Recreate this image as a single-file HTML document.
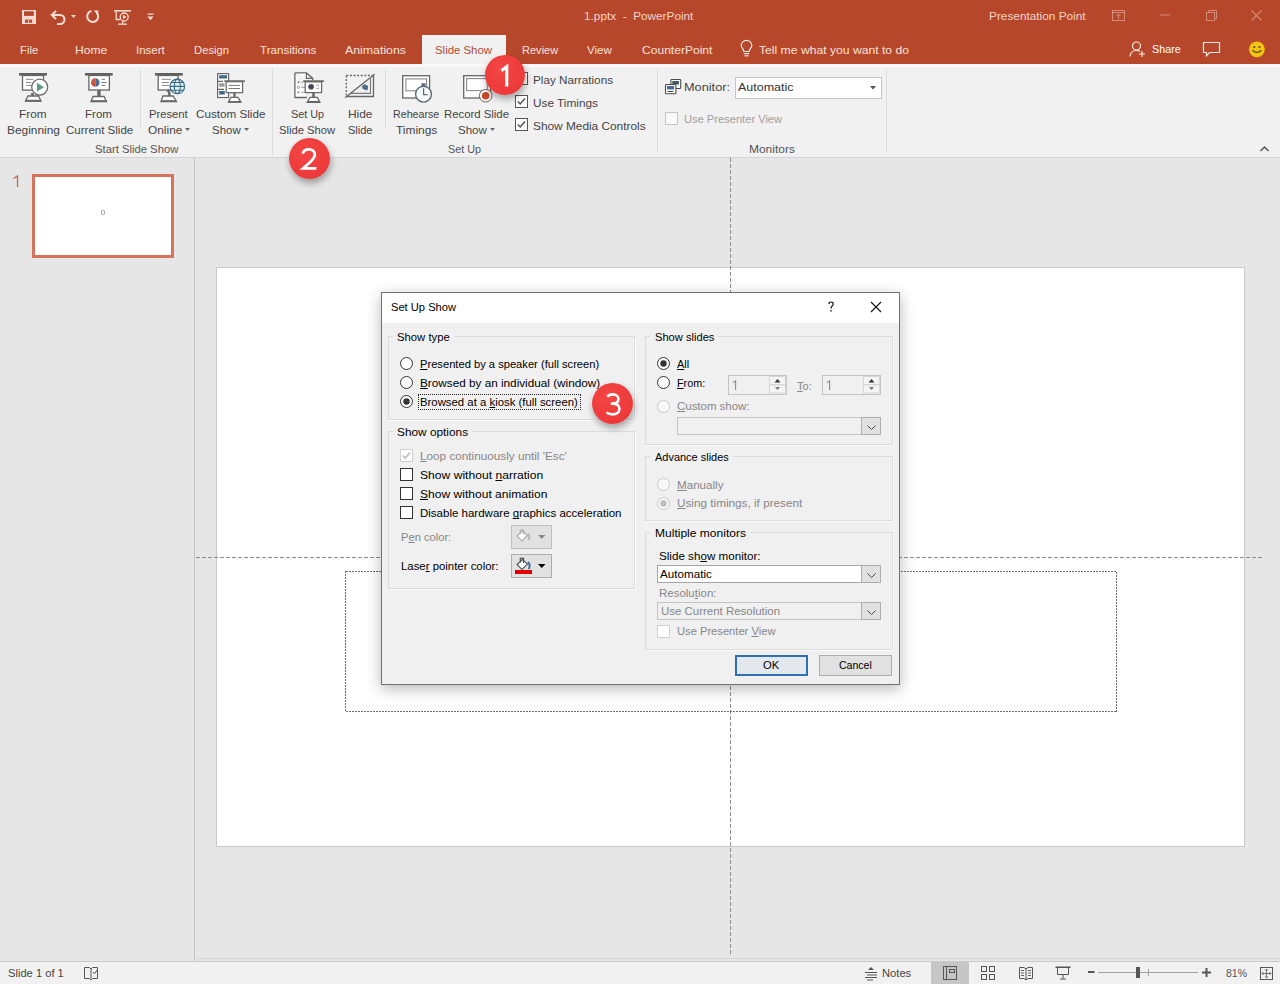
<!DOCTYPE html><html><head><meta charset="utf-8"><style>
*{box-sizing:border-box}
html,body{margin:0;padding:0;width:1280px;height:984px;overflow:hidden;background:#E6E6E6;font-family:"Liberation Sans", sans-serif}
.a{position:absolute}
.tx{position:absolute;white-space:pre;line-height:1;font-family:"Liberation Sans", sans-serif;transform-origin:0 0}
.tx u{text-decoration:underline;text-decoration-skip-ink:none;text-underline-offset:1px;text-decoration-thickness:1px}
svg{position:absolute;overflow:visible}
</style></head><body>
<div class="a" style="left:0;top:0;width:1280px;height:64px;background:#B7472A"></div>
<div class="a" style="left:422px;top:35px;width:84px;height:30px;background:#F1F1F1"></div>
<div class="a" style="left:0;top:64px;width:1280px;height:93px;background:#F1F1F1"></div>
<div class="a" style="left:0;top:64px;width:1280px;height:3px;background:#F8F8F8"></div>
<div class="a" style="left:0;top:157px;width:1280px;height:1px;background:#D4D4D4"></div>
<div class="a" style="left:140px;top:70px;width:1px;height:58px;background:#DCDCDC"></div>
<div class="a" style="left:272px;top:69px;width:1px;height:86px;background:#DCDCDC"></div>
<div class="a" style="left:385px;top:70px;width:1px;height:58px;background:#DCDCDC"></div>
<div class="a" style="left:657px;top:69px;width:1px;height:83px;background:#DCDCDC"></div>
<div class="a" style="left:886px;top:69px;width:1px;height:83px;background:#DCDCDC"></div>
<div class="a" style="left:0;top:158px;width:1280px;height:803px;background:#E6E6E6"></div>
<div class="a" style="left:194px;top:158px;width:1px;height:803px;background:#C6C6C6"></div>
<div class="a" style="left:196px;top:958px;width:1084px;height:1px;background:#D6D6D6"></div>
<div class="a" style="left:0;top:961px;width:1280px;height:1px;background:#C9C9C9"></div>
<div class="a" style="left:0;top:962px;width:1280px;height:22px;background:#F1F1F1"></div>
<div class="a" style="left:931px;top:962px;width:38px;height:22px;background:#C6C6C6"></div>
<div class="a" style="left:216px;top:267px;width:1029px;height:580px;background:#fff;border:1px solid #C8C8C8"></div>
<svg width="1280" height="984" style="left:0;top:0" shape-rendering="crispEdges"><line x1="730.5" y1="158" x2="730.5" y2="954" stroke="#8C8C8C" stroke-width="1" stroke-dasharray="3.5 2.5"/><line x1="196" y1="557.5" x2="1262" y2="557.5" stroke="#8C8C8C" stroke-width="1" stroke-dasharray="3.5 2.5"/><rect x="345.5" y="571.5" width="771" height="140" fill="none" stroke="#6E6E6E" stroke-width="1" stroke-dasharray="2 1"/></svg>
<div class="a" style="left:32px;top:174px;width:142px;height:84px;background:#fff;border:3px solid #D5735B"></div>
<div class="a" style="left:101px;top:210px;width:4px;height:5px;border:1px solid #B0B0B0;border-radius:1px"></div>
<div class="a" style="left:381px;top:292px;width:519px;height:393px;background:#F0F0F0;border:1px solid #707070;box-shadow:0 4px 14px rgba(0,0,0,0.28)"></div>
<div class="a" style="left:382px;top:293px;width:517px;height:30px;background:#FFFFFF"></div>
<div class="a" style="left:388px;top:336px;width:247px;height:84px;border:1px solid #DCDCDC;box-shadow:1px 1px 0 #FAFAFA"></div><div class="a" style="left:393px;top:334px;width:62px;height:5px;background:#F0F0F0"></div>
<div class="a" style="left:388px;top:431px;width:247px;height:158px;border:1px solid #DCDCDC;box-shadow:1px 1px 0 #FAFAFA"></div><div class="a" style="left:393px;top:429px;width:80px;height:5px;background:#F0F0F0"></div>
<div class="a" style="left:645px;top:336px;width:248px;height:109px;border:1px solid #DCDCDC;box-shadow:1px 1px 0 #FAFAFA"></div><div class="a" style="left:650px;top:334px;width:68px;height:5px;background:#F0F0F0"></div>
<div class="a" style="left:645px;top:456px;width:248px;height:65px;border:1px solid #DCDCDC;box-shadow:1px 1px 0 #FAFAFA"></div><div class="a" style="left:650px;top:454px;width:83px;height:5px;background:#F0F0F0"></div>
<div class="a" style="left:645px;top:532px;width:248px;height:118px;border:1px solid #DCDCDC;box-shadow:1px 1px 0 #FAFAFA"></div><div class="a" style="left:650px;top:530px;width:100px;height:5px;background:#F0F0F0"></div>
<svg width="16" height="16" viewBox="0 0 16 16" style="left:21px;top:9px" ><rect x="1" y="1" width="14" height="14" fill="#F7DCD3"/><rect x="3" y="2.3" width="9.8" height="4.6" fill="#B7472A"/><rect x="4" y="10.6" width="7.2" height="3.2" fill="#B7472A"/><rect x="7.2" y="11" width="1" height="2.8" fill="#F7DCD3"/></svg>
<svg width="18" height="16" viewBox="0 0 18 16" style="left:50px;top:9px" ><path d="M2.5 6 H10 a4.5 4.5 0 0 1 0 9 H7" fill="none" stroke="#F7DCD3" stroke-width="2"/><path d="M6 2 L1.8 6 L6 10" fill="none" stroke="#F7DCD3" stroke-width="2"/></svg>
<svg width="8" height="5" viewBox="0 0 8 5" style="left:70px;top:14px" ><path d="M1 1 H6 L3.5 4 Z" fill="#F7DCD3"/></svg>
<svg width="16" height="16" viewBox="0 0 16 16" style="left:85px;top:9px" ><path d="M6.4 2.1 A5.5 5.5 0 1 0 11.6 3.6" fill="none" stroke="#F7DCD3" stroke-width="2.1"/><path d="M8.6 1.6 H13.2 V6.2 Z" fill="#F7DCD3"/></svg>
<svg width="19" height="17" viewBox="0 0 19 17" style="left:113px;top:9px" ><rect x="1" y="1" width="17" height="1.6" fill="#F7DCD3"/><path d="M3.2 2.5 V10.5 H7" fill="none" stroke="#F7DCD3" stroke-width="1.3"/><circle cx="11.2" cy="8" r="4" fill="none" stroke="#F7DCD3" stroke-width="1.3"/><path d="M10 5.8 L13.5 8 L10 10.2 Z" fill="#F7DCD3"/><rect x="5" y="14.5" width="9" height="1.3" fill="#F7DCD3"/><rect x="9" y="12" width="1.2" height="3" fill="#F7DCD3"/></svg>
<svg width="9" height="10" viewBox="0 0 9 10" style="left:146px;top:12px" ><rect x="1.5" y="1.5" width="6" height="1.2" fill="#F7DCD3"/><path d="M1.5 4.5 H7.5 L4.5 8.2 Z" fill="#F7DCD3"/></svg>
<svg width="15" height="13" viewBox="0 0 15 13" style="left:1111px;top:9px" ><rect x="1.5" y="1.5" width="12" height="10" fill="none" stroke="#D48B78" stroke-width="1"/><line x1="1.5" y1="3.5" x2="13.5" y2="3.5" stroke="#D48B78"/><path d="M7.5 5 V10 M5.5 7 L7.5 5 L9.5 7" fill="none" stroke="#D48B78"/></svg>
<svg width="12" height="2" viewBox="0 0 12 2" style="left:1159px;top:14px" ><rect x="1" y="0.5" width="10" height="1" fill="#D48B78"/></svg>
<svg width="12" height="12" viewBox="0 0 12 12" style="left:1205px;top:9px" ><rect x="1.5" y="3.5" width="8" height="8" fill="none" stroke="#D48B78"/><path d="M3.5 3.5 V1.5 H11.5 V9.5 H9.5" fill="none" stroke="#D48B78"/></svg>
<svg width="13" height="13" viewBox="0 0 13 13" style="left:1250px;top:9px" ><path d="M1.5 1.5 L11.5 11.5 M11.5 1.5 L1.5 11.5" stroke="#D48B78" stroke-width="1.1"/></svg>
<svg width="13" height="18" viewBox="0 0 13 18" style="left:740px;top:40px" ><path d="M3.8 11.5 C3.8 9 1.2 8 1.2 5.6 A5.3 5.3 0 0 1 11.8 5.6 C11.8 8 9.2 9 9.2 11.5 Z" fill="none" stroke="#FBEAE4" stroke-width="1.2"/><rect x="3.8" y="13" width="5.4" height="1.2" fill="#FBEAE4"/><rect x="4.5" y="15.2" width="4" height="1.2" fill="#FBEAE4"/></svg>
<svg width="18" height="17" viewBox="0 0 18 17" style="left:1129px;top:41px" ><circle cx="7.5" cy="5" r="4" fill="none" stroke="#FBEAE4" stroke-width="1.2"/><path d="M1 15.5 C1.5 11 4 9.5 7.5 9.5 C9 9.5 10 9.8 11 10.5" fill="none" stroke="#FBEAE4" stroke-width="1.2"/><path d="M13 10 V16 M10 13 H16" stroke="#FBEAE4" stroke-width="1.2"/></svg>
<svg width="19" height="17" viewBox="0 0 19 17" style="left:1202px;top:41px" ><path d="M1.5 1.5 H17.5 V11.5 H7.5 L4.5 14.8 V11.5 H1.5 Z" fill="none" stroke="#FBEAE4" stroke-width="1.2"/></svg>
<svg width="18" height="17" viewBox="0 0 18 17" style="left:1248px;top:41px" ><circle cx="8.9" cy="8.3" r="7.9" fill="#F2C312"/><circle cx="6.3" cy="6" r="1.1" fill="#5A4A1A"/><circle cx="11.5" cy="6" r="1.1" fill="#5A4A1A"/><path d="M4.5 9.3 Q8.9 13.5 13.3 9.3" fill="none" stroke="#5A4A1A" stroke-width="1.2"/></svg>
<svg width="32" height="33" viewBox="0 0 32 33" style="left:17px;top:71px" ><rect x="2" y="2" width="28" height="2.6" fill="#5F6160"/><rect x="5.5" y="4.5" width="21" height="14.6" fill="#fff" stroke="#666666" stroke-width="1.3"/><path d="M9 8.3 H16.5 M9 11.5 H14 M9 14.4 H14" stroke="#8A8A8A" stroke-width="1"/><circle cx="22.7" cy="16.1" r="8" fill="#fff" stroke="#6B6B6B" stroke-width="1.3"/><path d="M20 11.8 L27 16.2 L20 20.6 Z" fill="#5B9A85"/><path d="M15 22 L16.5 27" stroke="#666666" stroke-width="2.6"/><path d="M11 25 H21.5 L24 30 H8.5 Z" fill="#fff" stroke="#666666" stroke-width="1.3"/><rect x="8.5" y="28.8" width="15.5" height="1.8" fill="#666666"/></svg>
<svg width="32" height="33" viewBox="0 0 32 33" style="left:83px;top:71px" ><rect x="2" y="2" width="27.7" height="2.6" fill="#5F6160"/><rect x="5.9" y="4.5" width="20.5" height="14.5" fill="#fff" stroke="#666666" stroke-width="1.3"/><path d="M12.3 7.2 A4.3 4.3 0 0 0 12.3 15.8 Z" fill="#C8553D"/><path d="M12.3 7.2 A4.3 4.3 0 0 1 12.3 15.8 Z" fill="#4A6B93"/><path d="M18.5 8.3 H22 M18.5 11.5 H23.5 M18.5 14.4 H22" stroke="#777" stroke-width="1"/><rect x="14.3" y="19" width="3.3" height="7" fill="#666666"/><path d="M10 25.5 H21 L23.5 30.5 H8 Z" fill="#fff" stroke="#666666" stroke-width="1.3"/><rect x="8" y="29.2" width="15.5" height="1.8" fill="#666666"/></svg>
<svg width="32" height="33" viewBox="0 0 32 33" style="left:153px;top:71px" ><rect x="2" y="2" width="27.8" height="2.6" fill="#5F6160"/><rect x="5.2" y="4.5" width="20" height="14.5" fill="#fff" stroke="#666666" stroke-width="1.3"/><path d="M8.7 8.3 H18 M8.7 11.5 H16 M8.7 14.4 H16" stroke="#8A8A8A" stroke-width="1"/><path d="M14.5 19 C16.5 21 17 24 15.5 26" stroke="#666666" stroke-width="2.6" fill="none"/><path d="M10 25 H20 L23.5 30.5 H8 Z" fill="#fff" stroke="#666666" stroke-width="1.3"/><rect x="8" y="29.2" width="15.5" height="1.8" fill="#666666"/><circle cx="24.3" cy="15.4" r="7.3" fill="#DDF1FA" stroke="#3F6A84" stroke-width="1.2"/><ellipse cx="24.3" cy="15.4" rx="3" ry="7.3" fill="none" stroke="#3F6A84" stroke-width="1.1"/><path d="M17 15.4 H31.6 M18.5 11.5 H30 M18.5 19.3 H30" stroke="#3F6A84" stroke-width="1.1"/></svg>
<svg width="32" height="33" viewBox="0 0 32 33" style="left:215px;top:71px" ><rect x="2.6" y="2.6" width="11" height="23.9" fill="#fff" stroke="#666666" stroke-width="1.2"/><rect x="4.2" y="4.2" width="7.8" height="3.3" fill="#3F6A84"/><rect x="4.2" y="12.2" width="5.4" height="3.5" fill="#9A9A9A"/><rect x="4.2" y="20" width="5.6" height="3.6" fill="#3F6A84"/><path d="M2.6 10.3 H8 M2.6 18.4 H9" stroke="#666666" stroke-width="1.2"/><rect x="9.3" y="9.3" width="20.5" height="1.6" fill="#5F6160"/><rect x="11.2" y="10.7" width="16.4" height="11" fill="#fff" stroke="#666666" stroke-width="1.2"/><path d="M13.5 14.4 H25 M13.5 17.5 H25" stroke="#777" stroke-width="1"/><rect x="18.4" y="21.6" width="2.2" height="4.5" fill="#666666"/><path d="M16 26.3 H23 L25.9 31.2 H13.4 Z" fill="#fff" stroke="#666666" stroke-width="1.3"/><rect x="13.4" y="30" width="12.5" height="1.6" fill="#666666"/></svg>
<svg width="34" height="34" viewBox="0 0 34 34" style="left:292px;top:70px" ><path d="M2.9 2.9 H14.4 L20.7 8.4 V10 M2.9 2.9 V27.5 H15" fill="#fff" stroke="#666666" stroke-width="1.3"/><path d="M14.4 2.9 V8.4 H20.7" fill="none" stroke="#666666" stroke-width="1.2"/><rect x="2.9" y="2.9" width="0" height="0"/><circle cx="6.5" cy="12.3" r="1.1" fill="#888"/><circle cx="6.5" cy="17.3" r="1.1" fill="none" stroke="#888" stroke-width="0.8"/><rect x="5.5" y="21.4" width="2" height="2" fill="#999"/><path d="M9 12.3 H11 M9 17.3 H13 M9 22.3 H13" stroke="#999" stroke-width="0.9"/><rect x="11.3" y="10.3" width="20.5" height="1.7" fill="#5F6160"/><rect x="13.2" y="11.9" width="16.4" height="10.7" fill="#fff" stroke="#666666" stroke-width="1.2"/><circle cx="19.1" cy="16.8" r="2.8" fill="#4B4257"/><path d="M24 15.2 H27.3 M24 18.3 H27.3" stroke="#999" stroke-width="0.9"/><rect x="20.3" y="22.6" width="2.5" height="4.6" fill="#666666"/><path d="M18 27.3 H25.3 L27.9 32.4 H15.2 Z" fill="#fff" stroke="#666666" stroke-width="1.3"/><rect x="15.2" y="31" width="12.7" height="1.8" fill="#666666"/></svg>
<svg width="34" height="28" viewBox="0 0 34 28" style="left:343px;top:72px" ><path d="M3.3 3.5 H31" stroke="#666666" stroke-width="1.3" stroke-dasharray="2 1.6"/><path d="M3.3 3.5 V24.5" stroke="#666666" stroke-width="1.3" stroke-dasharray="2 1.6"/><path d="M30.5 3.5 V24.5 H4" fill="none" stroke="#666666" stroke-width="1.3"/><path d="M27.5 6.5 V21.4 H8" fill="none" stroke="#777" stroke-width="1.1"/><path d="M19 14.5 A3.2 3.2 0 1 1 23.5 18.5 L19.5 16.8 Z" fill="#4E6C88"/><path d="M2 25.7 L31.6 2.2" stroke="#666666" stroke-width="1.3"/></svg>
<svg width="34" height="32" viewBox="0 0 34 32" style="left:400px;top:73px" ><rect x="2.7" y="2.7" width="26.9" height="22.3" fill="#fff" stroke="#666666" stroke-width="1.3"/><rect x="5.9" y="5.9" width="20.7" height="11.9" fill="#fff" stroke="#8A8A8A" stroke-width="1.1"/><rect x="21.5" y="10.2" width="4" height="2.8" fill="#5C6B78"/><circle cx="23.5" cy="21.2" r="7.9" fill="#F7FBFE" stroke="#5C6B78" stroke-width="1.4"/><path d="M23.6 15.3 V21.6 H27.6" fill="none" stroke="#5C6B78" stroke-width="1.3"/></svg>
<svg width="34" height="32" viewBox="0 0 34 32" style="left:461px;top:73px" ><rect x="2.7" y="2.7" width="26.9" height="22.3" fill="#fff" stroke="#666666" stroke-width="1.3"/><rect x="5.6" y="5.6" width="20.7" height="12" fill="#fff" stroke="#8A8A8A" stroke-width="1.1"/><circle cx="24.7" cy="22.7" r="6.3" fill="#FFF6F0" stroke="#666" stroke-width="1"/><circle cx="24.7" cy="22.7" r="3.8" fill="#C4492E"/></svg>
<svg width="6" height="4" viewBox="0 0 6 4" style="left:185px;top:128px" ><path d="M0 0 H5 L2.5 3 Z" fill="#666"/></svg>
<svg width="6" height="4" viewBox="0 0 6 4" style="left:243.75px;top:128px" ><path d="M0 0 H5 L2.5 3 Z" fill="#666"/></svg>
<svg width="6" height="4" viewBox="0 0 6 4" style="left:490px;top:128px" ><path d="M0 0 H5 L2.5 3 Z" fill="#666"/></svg>
<svg width="13" height="13" viewBox="0 0 13 13" style="left:515px;top:72px" ><rect x="0.5" y="0.5" width="12" height="12" fill="#fff" stroke="#555" stroke-width="1"/></svg>
<svg width="13" height="13" viewBox="0 0 13 13" style="left:515px;top:95px" ><rect x="0.5" y="0.5" width="12" height="12" fill="#fff" stroke="#555" stroke-width="1"/><path d="M2.8 6.5 L5.2 9 L10 3.5" fill="none" stroke="#555" stroke-width="1.5"/></svg>
<svg width="13" height="13" viewBox="0 0 13 13" style="left:515px;top:118px" ><rect x="0.5" y="0.5" width="12" height="12" fill="#fff" stroke="#555" stroke-width="1"/><path d="M2.8 6.5 L5.2 9 L10 3.5" fill="none" stroke="#555" stroke-width="1.5"/></svg>
<svg width="13" height="13" viewBox="0 0 13 13" style="left:665px;top:111.5px" ><rect x="0.5" y="0.5" width="12" height="12" fill="#FAFAFA" stroke="#C6C6C6" stroke-width="1"/></svg>
<svg width="18" height="17" viewBox="0 0 18 17" style="left:664px;top:78px" ><rect x="6.9" y="1.5" width="9.8" height="9" fill="#fff" stroke="#4A4A4A" stroke-width="1.1" rx="0.8"/><rect x="8.3" y="3" width="6.6" height="3.5" fill="#3D5A66"/><rect x="1.5" y="6.5" width="10.4" height="9.2" fill="#fff" stroke="#4A4A4A" stroke-width="1.1" rx="0.8"/><rect x="3.1" y="8" width="7" height="3.5" fill="#4A6A95"/><rect x="3.5" y="13" width="6" height="1" fill="#444"/></svg>
<div class="a" style="left:735px;top:77px;width:147px;height:22px;background:#fff;border:1px solid #C6C6C6"></div>
<svg width="7" height="4" viewBox="0 0 7 4" style="left:870px;top:86px" ><path d="M0 0 H6 L3 3.5 Z" fill="#555"/></svg>
<svg width="12" height="8" viewBox="0 0 12 8" style="left:1259px;top:145px" ><path d="M1.5 6 L5.5 2 L9.5 6" fill="none" stroke="#555" stroke-width="1.5"/></svg>
<svg width="16" height="16" viewBox="0 0 16 16" style="left:83px;top:965px" ><path d="M1.5 2.5 H6.5 L8 4 L9.5 2.5 H14.5 V13.5 H9.5 L8 15 L6.5 13.5 H1.5 Z" fill="none" stroke="#555" stroke-width="1"/><path d="M8 4 V13.5" stroke="#555"/><path d="M10 7 L11.5 8.8 L14.5 4.5" fill="none" stroke="#555" stroke-width="1"/></svg>
<svg width="15" height="14" viewBox="0 0 15 14" style="left:864px;top:966px" ><path d="M4 4 L7 1 L10 4 Z" fill="#555"/><path d="M1 6.5 H13 M3 9 H13 M1 11.5 H13 M3 14 H9" stroke="#555" stroke-width="1"/></svg>
<svg width="16" height="16" viewBox="0 0 16 16" style="left:942px;top:965px" ><rect x="1.5" y="1.5" width="13" height="13" fill="none" stroke="#555"/><path d="M4.5 1.5 V14.5 H14.5" fill="none" stroke="#555"/><rect x="7.5" y="4.5" width="5" height="3" fill="none" stroke="#555"/></svg>
<svg width="16" height="16" viewBox="0 0 16 16" style="left:980px;top:965px" ><rect x="1.5" y="1.5" width="5" height="5" fill="none" stroke="#555"/><rect x="9.5" y="1.5" width="5" height="5" fill="none" stroke="#555"/><rect x="1.5" y="9.5" width="5" height="5" fill="none" stroke="#555"/><rect x="9.5" y="9.5" width="5" height="5" fill="none" stroke="#555"/></svg>
<svg width="16" height="16" viewBox="0 0 16 16" style="left:1018px;top:965px" ><path d="M1.5 2.5 H6 L8 4 L10 2.5 H14.5 V13.5 H10 L8 15 L6 13.5 H1.5 Z M8 4 V15" fill="none" stroke="#555"/><path d="M3 5.5 H6 M3 8 H6 M3 10.5 H6 M10 5.5 H13 M10 8 H13 M10 10.5 H13" stroke="#555" stroke-width="0.9"/></svg>
<svg width="17" height="16" viewBox="0 0 17 16" style="left:1055px;top:965px" ><rect x="0.5" y="1.5" width="15" height="1.5" fill="#555"/><path d="M2.5 3 V9.5 H13.5 V3" fill="none" stroke="#555"/><path d="M8 9.5 V13.5 M5 14 H11" stroke="#555"/></svg>
<svg width="9" height="8" viewBox="0 0 9 8" style="left:1087px;top:968px" ><rect x="1" y="3" width="6.5" height="2" fill="#555"/></svg>
<div class="a" style="left:1098px;top:972px;width:100px;height:1px;background:#A0A0A0"></div>
<div class="a" style="left:1148px;top:969px;width:1px;height:7px;background:#A0A0A0"></div>
<div class="a" style="left:1136px;top:967px;width:4px;height:11px;background:#555"></div>
<svg width="11" height="11" viewBox="0 0 11 11" style="left:1201px;top:967px" ><path d="M5.5 1 V10 M1 5.5 H10" stroke="#555" stroke-width="2"/></svg>
<svg width="15" height="15" viewBox="0 0 15 15" style="left:1259px;top:966px" ><rect x="1.5" y="1.5" width="12" height="12" fill="none" stroke="#555"/><path d="M7.5 3 V12 M3 7.5 H12" stroke="#555" stroke-width="0.8"/><path d="M6 4.5 L7.5 3 L9 4.5 M6 10.5 L7.5 12 L9 10.5 M4.5 6 L3 7.5 L4.5 9 M10.5 6 L12 7.5 L10.5 9" fill="none" stroke="#555" stroke-width="0.8"/></svg>
<svg width="7" height="12" viewBox="0 0 7 12" style="left:828px;top:301px" ><path d="M1 3 Q1 1 3 1 Q5.2 1 5.2 3.1 Q5.2 4.4 3.9 5.3 Q3 6 3 7.6" fill="none" stroke="#111" stroke-width="1.2"/><rect x="2.3" y="9.2" width="1.4" height="1.4" fill="#111"/></svg>
<svg width="12" height="12" viewBox="0 0 12 12" style="left:870px;top:301px" ><path d="M1 1 L11 11 M11 1 L1 11" stroke="#111" stroke-width="1.1"/></svg>
<svg width="13" height="13" viewBox="0 0 13 13" style="left:400px;top:357px" ><circle cx="6.5" cy="6.5" r="6" fill="#fff" stroke="#333" stroke-width="1"/></svg>
<svg width="13" height="13" viewBox="0 0 13 13" style="left:400px;top:376px" ><circle cx="6.5" cy="6.5" r="6" fill="#fff" stroke="#333" stroke-width="1"/></svg>
<svg width="13" height="13" viewBox="0 0 13 13" style="left:400px;top:395px" ><circle cx="6.5" cy="6.5" r="6" fill="#fff" stroke="#333" stroke-width="1"/><circle cx="6.5" cy="6.5" r="3.2" fill="#333"/></svg>
<svg width="13" height="13" viewBox="0 0 13 13" style="left:657px;top:357px" ><circle cx="6.5" cy="6.5" r="6" fill="#fff" stroke="#333" stroke-width="1"/><circle cx="6.5" cy="6.5" r="3.2" fill="#333"/></svg>
<svg width="13" height="13" viewBox="0 0 13 13" style="left:657px;top:376px" ><circle cx="6.5" cy="6.5" r="6" fill="#fff" stroke="#333" stroke-width="1"/></svg>
<svg width="13" height="13" viewBox="0 0 13 13" style="left:657px;top:400px" ><circle cx="6.5" cy="6.5" r="6" fill="#F8F8F8" stroke="#C8C8C8" stroke-width="1"/></svg>
<svg width="13" height="13" viewBox="0 0 13 13" style="left:657px;top:478px" ><circle cx="6.5" cy="6.5" r="6" fill="#F8F8F8" stroke="#C8C8C8" stroke-width="1"/></svg>
<svg width="13" height="13" viewBox="0 0 13 13" style="left:657px;top:497px" ><circle cx="6.5" cy="6.5" r="6" fill="#F8F8F8" stroke="#C8C8C8" stroke-width="1"/><circle cx="6.5" cy="6.5" r="3.2" fill="#BDBDBD"/></svg>
<svg width="13" height="13" viewBox="0 0 13 13" style="left:400px;top:449px" ><rect x="0.5" y="0.5" width="12" height="12" fill="#FFFFFF" stroke="#D0D0D0"/><path d="M2.7 6.5 L5.2 9 L10.2 3.5" fill="none" stroke="#BDBDBD" stroke-width="1.6"/></svg>
<svg width="13" height="13" viewBox="0 0 13 13" style="left:400px;top:468px" ><rect x="0.5" y="0.5" width="12" height="12" fill="#fff" stroke="#333"/></svg>
<svg width="13" height="13" viewBox="0 0 13 13" style="left:400px;top:487px" ><rect x="0.5" y="0.5" width="12" height="12" fill="#fff" stroke="#333"/></svg>
<svg width="13" height="13" viewBox="0 0 13 13" style="left:400px;top:506px" ><rect x="0.5" y="0.5" width="12" height="12" fill="#fff" stroke="#333"/></svg>
<svg width="13" height="13" viewBox="0 0 13 13" style="left:657px;top:624.5px" ><rect x="0.5" y="0.5" width="12" height="12" fill="#FFFFFF" stroke="#D0D0D0"/></svg>
<div class="a" style="left:418px;top:394px;width:163px;height:16px;border:1px dotted #222"></div>
<div class="a" style="left:728px;top:375px;width:59px;height:20px;border:1px solid #C4C4C4;background:#F0F0F0"></div><svg width="17" height="18" viewBox="0 0 17 18" style="left:769px;top:376px" ><rect x="0.5" y="0.5" width="16" height="8" fill="#F4F4F4" stroke="#D6D6D6"/><rect x="0.5" y="9" width="16" height="8" fill="#F4F4F4" stroke="#D6D6D6"/><path d="M5.5 6.5 L8.5 3 L11.5 6.5 Z" fill="#333"/><path d="M6 11 H11 L8.5 14 Z" fill="#777"/></svg>
<div class="a" style="left:822px;top:375px;width:59px;height:20px;border:1px solid #C4C4C4;background:#F0F0F0"></div><svg width="17" height="18" viewBox="0 0 17 18" style="left:863px;top:376px" ><rect x="0.5" y="0.5" width="16" height="8" fill="#F4F4F4" stroke="#D6D6D6"/><rect x="0.5" y="9" width="16" height="8" fill="#F4F4F4" stroke="#D6D6D6"/><path d="M5.5 6.5 L8.5 3 L11.5 6.5 Z" fill="#333"/><path d="M6 11 H11 L8.5 14 Z" fill="#777"/></svg>
<svg width="6" height="11" viewBox="0 0 6 11" style="left:731.5px;top:380px" ><path d="M0.8 2.6 L3.6 0.8 V10" fill="none" stroke="#8A8A8A" stroke-width="1.1"/></svg>
<svg width="6" height="11" viewBox="0 0 6 11" style="left:825.5px;top:380px" ><path d="M0.8 2.6 L3.6 0.8 V10" fill="none" stroke="#8A8A8A" stroke-width="1.1"/></svg>
<div class="a" style="left:677px;top:417px;width:204px;height:18px;border:1px solid #C4C4C4;background:#F0F0F0"></div><div class="a" style="left:861px;top:417px;width:20px;height:18px;border:1px solid #ADADAD;background:#E1E1E1"></div><svg width="11" height="7" viewBox="0 0 11 7" style="left:866px;top:423.5px" ><path d="M1.5 1.5 L5.5 5.5 L9.5 1.5" fill="none" stroke="#444" stroke-width="1"/></svg>
<div class="a" style="left:657px;top:565px;width:224px;height:18px;border:1px solid #A5A5A5;background:#FFFFFF"></div><div class="a" style="left:861px;top:565px;width:20px;height:18px;border:1px solid #ADADAD;background:#E1E1E1"></div><svg width="11" height="7" viewBox="0 0 11 7" style="left:866px;top:571.5px" ><path d="M1.5 1.5 L5.5 5.5 L9.5 1.5" fill="none" stroke="#444" stroke-width="1"/></svg>
<div class="a" style="left:657px;top:602px;width:224px;height:18px;border:1px solid #C4C4C4;background:#F0F0F0"></div><div class="a" style="left:861px;top:602px;width:20px;height:18px;border:1px solid #ADADAD;background:#E1E1E1"></div><svg width="11" height="7" viewBox="0 0 11 7" style="left:866px;top:608.5px" ><path d="M1.5 1.5 L5.5 5.5 L9.5 1.5" fill="none" stroke="#444" stroke-width="1"/></svg>
<div class="a" style="left:511px;top:525px;width:41px;height:24px;border:1px solid #BFBFBF;background:#E1E1E1"></div>
<svg width="8" height="5" viewBox="0 0 8 5" style="left:538px;top:535px" ><path d="M0 0 H7.5 L3.75 4 Z" fill="#8A8A8A"/></svg>
<svg width="18" height="14" viewBox="0 0 18 14" style="left:514px;top:528px" ><path d="M3 8 L8.5 3 L13.5 7.5 L8 13 Z" fill="#fff" stroke="#ABABAB" stroke-width="1.1"/><path d="M6.3 6 V2 H9.5 V6.5" fill="none" stroke="#ABABAB" stroke-width="1.1"/><path d="M14 5.5 Q16.5 8.5 14.5 12" stroke="#B5B5B5" stroke-width="1.8" fill="none"/></svg>
<div class="a" style="left:511px;top:554px;width:41px;height:24px;border:1px solid #ADADAD;background:#E1E1E1"></div>
<svg width="8" height="5" viewBox="0 0 8 5" style="left:537.5px;top:564px" ><path d="M0 0 H7.5 L3.75 4 Z" fill="#000"/></svg>
<svg width="18" height="14" viewBox="0 0 18 14" style="left:514px;top:556px" ><path d="M3 8.5 L8.5 3.5 L13.5 8 L8 13.5 Z" fill="#fff" stroke="#4E5A52" stroke-width="1.1"/><path d="M6.3 6.5 V2.3 H9.5 V7" fill="none" stroke="#444" stroke-width="1.1"/><path d="M14 6 Q16.8 9 14.8 13" stroke="#4A6A95" stroke-width="2" fill="none"/></svg>
<div class="a" style="left:515px;top:570px;width:16.5px;height:3.5px;background:#E00000"></div>
<div class="a" style="left:735px;top:655px;width:73px;height:21px;border:2px solid #2F6FB3;background:#E3E8EE"></div>
<div class="a" style="left:819px;top:655px;width:73px;height:21px;border:1px solid #ADADAD;background:#E1E1E1"></div>
<svg width="9" height="13" viewBox="0 0 9 13" style="left:12px;top:175px" ><path d="M1.5 3.5 L5.5 1 V12" fill="none" stroke="#C46A55" stroke-width="1.3"/></svg>
<div class="tx" id="t0" style="left:584.40px;top:10.87px;font-size:11.5px;color:#F3D3C9;transform:scaleX(1.0248);">1.pptx&nbsp;&nbsp;-&nbsp;&nbsp;PowerPoint</div>
<div class="tx" id="t1" style="left:989.40px;top:11.27px;font-size:11.5px;color:#F3D3C9;transform:scaleX(1.0278);">Presentation Point</div>
<div class="tx" id="t2" style="left:20.25px;top:44.97px;font-size:11.5px;color:#F9E2DA;transform:scaleX(0.9821);">File</div>
<div class="tx" id="t3" style="left:74.60px;top:44.97px;font-size:11.5px;color:#F9E2DA;transform:scaleX(1.0525);">Home</div>
<div class="tx" id="t4" style="left:136.30px;top:44.97px;font-size:11.5px;color:#F9E2DA;transform:scaleX(0.9977);">Insert</div>
<div class="tx" id="t5" style="left:194.00px;top:44.97px;font-size:11.5px;color:#F9E2DA;transform:scaleX(0.9801);">Design</div>
<div class="tx" id="t6" style="left:259.70px;top:44.97px;font-size:11.5px;color:#F9E2DA;transform:scaleX(1.0085);">Transitions</div>
<div class="tx" id="t7" style="left:345.00px;top:44.97px;font-size:11.5px;color:#F9E2DA;transform:scaleX(1.0722);">Animations</div>
<div class="tx" id="t8" style="left:521.60px;top:44.97px;font-size:11.5px;color:#F9E2DA;transform:scaleX(0.9597);">Review</div>
<div class="tx" id="t9" style="left:587.20px;top:44.97px;font-size:11.5px;color:#F9E2DA;transform:scaleX(1.0033);">View</div>
<div class="tx" id="t10" style="left:641.60px;top:44.97px;font-size:11.5px;color:#F9E2DA;transform:scaleX(1.0488);">CounterPoint</div>
<div class="tx" id="t11" style="left:759.00px;top:44.97px;font-size:11.5px;color:#F9E2DA;transform:scaleX(1.0569);">Tell me what you want to do</div>
<div class="tx" id="t12" style="left:435.00px;top:44.77px;font-size:11.5px;color:#B04A33;transform:scaleX(0.9905);">Slide Show</div>
<div class="tx" id="t13" style="left:1152.25px;top:44.47px;font-size:11.5px;color:#FFFFFF;transform:scaleX(0.9369);">Share</div>
<div class="tx" id="t14" style="left:19.00px;top:108.97px;font-size:11.5px;color:#444444;transform:scaleX(1.0282);">From</div>
<div class="tx" id="t15" style="left:6.50px;top:125.17px;font-size:11.5px;color:#444444;transform:scaleX(1.0341);">Beginning</div>
<div class="tx" id="t16" style="left:85.20px;top:108.97px;font-size:11.5px;color:#444444;transform:scaleX(1.0058);">From</div>
<div class="tx" id="t17" style="left:65.60px;top:125.17px;font-size:11.5px;color:#444444;transform:scaleX(1.0011);">Current Slide</div>
<div class="tx" id="t18" style="left:149.40px;top:108.97px;font-size:11.5px;color:#444444;transform:scaleX(0.9737);">Present</div>
<div class="tx" id="t19" style="left:147.50px;top:125.17px;font-size:11.5px;color:#444444;transform:scaleX(1.0346);">Online</div>
<div class="tx" id="t20" style="left:195.60px;top:108.97px;font-size:11.5px;color:#444444;transform:scaleX(1.0148);">Custom Slide</div>
<div class="tx" id="t21" style="left:211.90px;top:125.17px;font-size:11.5px;color:#444444;transform:scaleX(0.9972);">Show</div>
<div class="tx" id="t22" style="left:291.00px;top:108.97px;font-size:11.5px;color:#444444;transform:scaleX(0.9382);">Set Up</div>
<div class="tx" id="t23" style="left:279.40px;top:125.17px;font-size:11.5px;color:#444444;transform:scaleX(0.9766);">Slide Show</div>
<div class="tx" id="t24" style="left:347.50px;top:108.97px;font-size:11.5px;color:#444444;transform:scaleX(1.0357);">Hide</div>
<div class="tx" id="t25" style="left:347.50px;top:125.17px;font-size:11.5px;color:#444444;transform:scaleX(0.9578);">Slide</div>
<div class="tx" id="t26" style="left:392.50px;top:108.97px;font-size:11.5px;color:#444444;transform:scaleX(0.9273);">Rehearse</div>
<div class="tx" id="t27" style="left:395.60px;top:125.17px;font-size:11.5px;color:#444444;transform:scaleX(1.0365);">Timings</div>
<div class="tx" id="t28" style="left:444.40px;top:108.97px;font-size:11.5px;color:#444444;transform:scaleX(0.9872);">Record Slide</div>
<div class="tx" id="t29" style="left:458.00px;top:125.17px;font-size:11.5px;color:#444444;transform:scaleX(1.0041);">Show</div>
<div class="tx" id="t30" style="left:94.50px;top:144.27px;font-size:11.5px;color:#555;transform:scaleX(0.9798);">Start Slide Show</div>
<div class="tx" id="t31" style="left:448.25px;top:144.27px;font-size:11.5px;color:#555;transform:scaleX(0.9382);">Set Up</div>
<div class="tx" id="t32" style="left:748.80px;top:144.27px;font-size:11.5px;color:#555;transform:scaleX(1.0406);">Monitors</div>
<div class="tx" id="t33" style="left:533.00px;top:74.67px;font-size:11.5px;color:#444444;transform:scaleX(1.0175);">Play Narrations</div>
<div class="tx" id="t34" style="left:533.00px;top:97.77px;font-size:11.5px;color:#444444;transform:scaleX(1.0272);">Use Timings</div>
<div class="tx" id="t35" style="left:533.00px;top:120.67px;font-size:11.5px;color:#444444;transform:scaleX(1.0301);">Show Media Controls</div>
<div class="tx" id="t36" style="left:684.00px;top:82.27px;font-size:11.5px;color:#444444;transform:scaleX(1.1072);">Monitor:</div>
<div class="tx" id="t37" style="left:738.40px;top:82.27px;font-size:11.5px;color:#333;transform:scaleX(1.0833);">Automatic</div>
<div class="tx" id="t38" style="left:683.50px;top:113.77px;font-size:11.5px;color:#A0A0A0;transform:scaleX(0.9672);">Use Presenter View</div>
<div class="tx" id="t39" style="left:7.50px;top:968.27px;font-size:11.5px;color:#444;transform:scaleX(0.9696);">Slide 1 of 1</div>
<div class="tx" id="t40" style="left:882.30px;top:968.27px;font-size:11.5px;color:#444;transform:scaleX(0.9718);">Notes</div>
<div class="tx" id="t41" style="left:1226.00px;top:968.27px;font-size:11.5px;color:#555;transform:scaleX(0.9118);">81%</div>
<div class="tx" id="t42" style="left:390.60px;top:302.27px;font-size:11.5px;color:#000000;transform:scaleX(0.9683);">Set Up Show</div>
<div class="tx" id="t43" style="left:397.25px;top:331.97px;font-size:11.5px;color:#000000;transform:scaleX(0.9823);">Show type</div>
<div class="tx" id="t44" style="left:420.20px;top:359.27px;font-size:11.5px;color:#000000;transform:scaleX(0.9700);"><u>P</u>resented by a speaker (full screen)</div>
<div class="tx" id="t45" style="left:420.20px;top:378.07px;font-size:11.5px;color:#000000;transform:scaleX(1.0214);"><u>B</u>rowsed by an individual (window)</div>
<div class="tx" id="t46" style="left:420.20px;top:396.87px;font-size:11.5px;color:#000000;transform:scaleX(0.9875);">Browsed at a <u>k</u>iosk (full screen)</div>
<div class="tx" id="t47" style="left:397.30px;top:427.07px;font-size:11.5px;color:#000000;transform:scaleX(1.0297);">Show options</div>
<div class="tx" id="t48" style="left:420.20px;top:451.37px;font-size:11.5px;color:#878787;transform:scaleX(1.0210);"><u>L</u>oop continuously until 'Esc'</div>
<div class="tx" id="t49" style="left:420.20px;top:470.07px;font-size:11.5px;color:#000000;transform:scaleX(1.0537);">Show without <u>n</u>arration</div>
<div class="tx" id="t50" style="left:420.20px;top:489.07px;font-size:11.5px;color:#000000;transform:scaleX(1.0488);"><u>S</u>how without animation</div>
<div class="tx" id="t51" style="left:420.20px;top:508.07px;font-size:11.5px;color:#000000;transform:scaleX(1.0006);">Disable hardware <u>g</u>raphics acceleration</div>
<div class="tx" id="t52" style="left:401.30px;top:532.07px;font-size:11.5px;color:#878787;transform:scaleX(0.9692);">P<u>e</u>n color:</div>
<div class="tx" id="t53" style="left:401.30px;top:561.07px;font-size:11.5px;color:#000000;transform:scaleX(0.9902);">Lase<u>r</u> pointer color:</div>
<div class="tx" id="t54" style="left:654.60px;top:331.97px;font-size:11.5px;color:#000000;transform:scaleX(0.9678);">Show slides</div>
<div class="tx" id="t55" style="left:677.20px;top:359.07px;font-size:11.5px;color:#000000;transform:scaleX(0.9534);"><u>A</u>ll</div>
<div class="tx" id="t56" style="left:677.20px;top:378.07px;font-size:11.5px;color:#000000;transform:scaleX(0.9390);"><u>F</u>rom:</div>
<div class="tx" id="t57" style="left:796.80px;top:380.57px;font-size:11.5px;color:#878787;transform:scaleX(0.9646);"><u>T</u>o:</div>
<div class="tx" id="t58" style="left:677.20px;top:400.87px;font-size:11.5px;color:#878787;transform:scaleX(0.9949);"><u>C</u>ustom show:</div>
<div class="tx" id="t59" style="left:654.60px;top:452.07px;font-size:11.5px;color:#000000;transform:scaleX(0.9540);">Advance slides</div>
<div class="tx" id="t60" style="left:677.20px;top:479.82px;font-size:11.5px;color:#878787;transform:scaleX(1.0098);"><u>M</u>anually</div>
<div class="tx" id="t61" style="left:677.20px;top:498.07px;font-size:11.5px;color:#878787;transform:scaleX(1.0209);"><u>U</u>sing timings, if present</div>
<div class="tx" id="t62" style="left:654.60px;top:528.07px;font-size:11.5px;color:#000000;transform:scaleX(1.0469);">Multiple monitors</div>
<div class="tx" id="t63" style="left:658.70px;top:550.87px;font-size:11.5px;color:#000000;transform:scaleX(1.0117);">Slide sh<u>o</u>w monitor:</div>
<div class="tx" id="t64" style="left:660.30px;top:568.77px;font-size:11.5px;color:#000000;transform:scaleX(1.0129);">Automatic</div>
<div class="tx" id="t65" style="left:658.70px;top:588.37px;font-size:11.5px;color:#878787;transform:scaleX(0.9989);">Resolu<u>t</u>ion:</div>
<div class="tx" id="t66" style="left:660.60px;top:605.77px;font-size:11.5px;color:#878787;transform:scaleX(0.9956);">Use Current Resolution</div>
<div class="tx" id="t67" style="left:676.80px;top:626.37px;font-size:11.5px;color:#878787;transform:scaleX(0.9705);">Use Presenter <u>V</u>iew</div>
<div class="tx" id="t68" style="left:763.40px;top:660.27px;font-size:11.5px;color:#000000;transform:scaleX(0.9744);">OK</div>
<div class="tx" id="t69" style="left:838.70px;top:660.27px;font-size:11.5px;color:#000000;transform:scaleX(0.9159);">Cancel</div>
<div class="a" style="left:485.2px;top:55.2px;width:40px;height:40px;border-radius:50%;background:radial-gradient(circle at 40% 35%, #F44545 0%, #EE3B3B 60%, #E53535 100%);box-shadow:1px 4px 7px rgba(0,0,0,0.33);"></div><svg width="17" height="23" viewBox="0 0 17 23" style="left:498.5px;top:63.5px" ><path d="M2.4 6.8 L7.8 2.6 V22.4" fill="none" stroke="#fff" stroke-width="3" stroke-linejoin="miter"/></svg><div class="a" style="left:289.0px;top:138.0px;width:41.0px;height:41.0px;border-radius:50%;background:radial-gradient(circle at 40% 35%, #F44545 0%, #EE3B3B 60%, #E53535 100%);box-shadow:1px 4px 7px rgba(0,0,0,0.33);"></div><svg width="17" height="23" viewBox="0 0 17 23" style="left:301px;top:147.5px" ><path d="M1.8 5.6 C2.4 2.8 4.8 1.3 7.8 1.3 C11.4 1.3 13.8 3.4 13.8 6.6 C13.8 9.6 12 11.6 8.8 14.4 L2 20.4 H15.4" fill="none" stroke="#fff" stroke-width="2.7"/></svg><div class="a" style="left:592.0px;top:383.0px;width:41.0px;height:41.0px;border-radius:50%;background:radial-gradient(circle at 40% 35%, #F44545 0%, #EE3B3B 60%, #E53535 100%);box-shadow:1px 4px 7px rgba(0,0,0,0.33);"></div><svg width="17" height="23" viewBox="0 0 17 23" style="left:604.8px;top:392.5px" ><path d="M2.2 3.4 C3.8 2 5.6 1.4 7.8 1.4 C11.2 1.4 13.4 3.2 13.4 6 C13.4 8.8 11.2 10.6 7.6 10.6 H5.8 M7.6 10.6 C11.8 10.6 14.4 12.6 14.4 15.8 C14.4 19.3 11.6 21.4 7.6 21.4 C5.2 21.4 3.2 20.7 1.4 19.5" fill="none" stroke="#fff" stroke-width="2.6"/></svg>
</body></html>
